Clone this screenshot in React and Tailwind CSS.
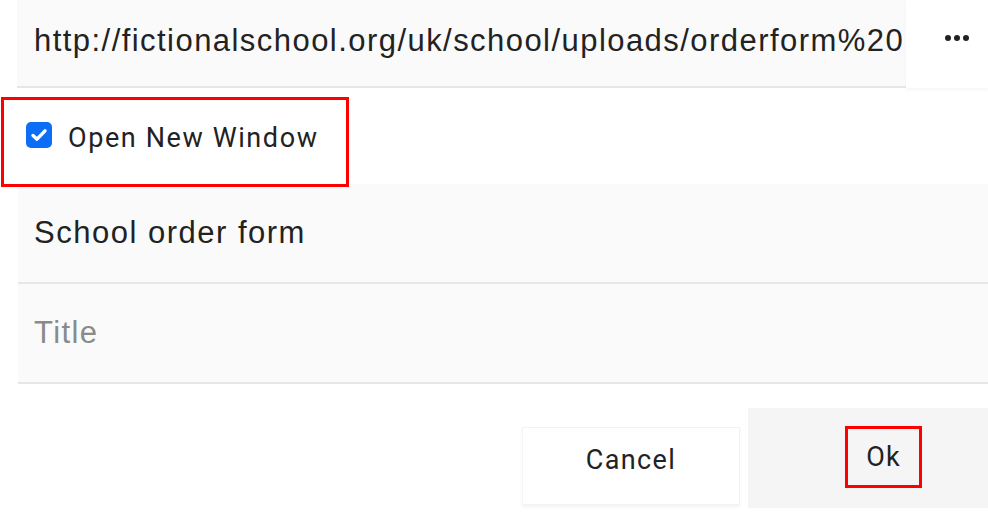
import React from "react";

export default function App() {
  return (
    <div className="w-[988px] h-[512px] bg-white overflow-hidden relative">
      {/* URL row */}
      <div className="flex h-[88px]">
        <div className="ml-[17px] w-[889px] h-[88px] bg-[#fafafa] border-b-2 border-[#e6e6e6] flex items-center overflow-hidden">
          <span className="pl-[17px] -mt-[3px] whitespace-nowrap text-[31px] text-[#222] font-['Liberation_Sans',Arial,sans-serif] tracking-[1.45px]">
            http://fictionalschool.org/uk/school/uploads/orderform%20
          </span>
        </div>
        <div className="flex-1 h-[88px] bg-white flex items-start shadow-[0_2px_3px_rgba(0,0,0,0.04)]">
          <div className="flex gap-[3px] ml-[39px] mt-[35px]">
            <span className="w-[6px] h-[6px] rounded-full bg-[#222]" />
            <span className="w-[6px] h-[6px] rounded-full bg-[#222]" />
            <span className="w-[6px] h-[6px] rounded-full bg-[#222]" />
          </div>
        </div>
      </div>

      {/* Checkbox row */}
      <div className="flex h-[96px]">
        <div className="mt-[9px] ml-[1px] w-[348px] h-[90px] border-[3px] border-[#ff0000] flex items-start relative z-10">
          <div className="mt-[22px] ml-[22px] w-[26px] h-[26px] rounded-[5px] bg-[#0b6ef5] flex items-center justify-center">
            <svg width="20" height="20" viewBox="0 0 20 20">
              <path d="M4 10.5 L8 14.2 L16 5.8" fill="none" stroke="white" strokeWidth="3.4" strokeLinecap="round" strokeLinejoin="round" />
            </svg>
          </div>
          <span className="mt-[25px] ml-[16px] leading-none text-[27px] text-[#222] tracking-[1.6px] font-['Roboto',sans-serif]">
            Open New Window
          </span>
        </div>
      </div>

      {/* Fields */}
      <div className="ml-[18px]">
        <div className="h-[100px] bg-[#fafafa] border-b-2 border-[#e6e6e6] flex items-center">
          <span className="pl-[16px] text-[31px] text-[#222] font-['Liberation_Sans',Arial,sans-serif] tracking-[1.5px]">
            School order form
          </span>
        </div>
        <div className="h-[100px] bg-[#fafafa] border-b-2 border-[#e6e6e6] flex items-center">
          <span className="pl-[16px] text-[31px] text-[#8a8a8a] font-['Liberation_Sans',Arial,sans-serif] tracking-[1.4px]">
            Title
          </span>
        </div>
      </div>

      {/* Buttons */}
      <div className="flex justify-end mt-[24px]">
        <div className="mt-[19px] w-[218px] h-[78px] bg-white border border-[#f3f3f3] shadow-[0_2px_3px_rgba(0,0,0,0.05)] flex items-center justify-center mr-[8px]">
          <span className="text-[27px] text-[#222] tracking-[1.4px] font-['Roboto',sans-serif] -mt-[12px]">Cancel</span>
        </div>
        <div className="w-[240px] h-[100px] bg-[#f5f5f5] flex items-start">
          <div className="mt-[18px] ml-[97px] w-[77px] h-[62px] border-[3px] border-[#ff0000] flex items-center justify-center">
            <span className="text-[27px] text-[#222] tracking-[1px] font-['Roboto',sans-serif]">Ok</span>
          </div>
        </div>
      </div>
    </div>
  );
}
